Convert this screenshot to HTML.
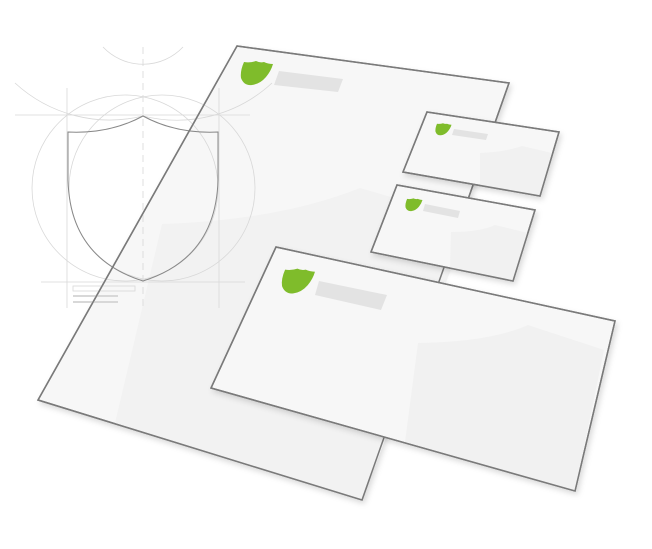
<!DOCTYPE html><html><head><style>html,body{margin:0;background:#fff;width:652px;height:549px;overflow:hidden}</style></head><body>
<svg width="652" height="549" viewBox="0 0 652 549" xmlns="http://www.w3.org/2000/svg">
<defs>
<filter id="sh" x="-10%" y="-10%" width="130%" height="130%"><feDropShadow dx="2" dy="3" stdDeviation="3" flood-color="#000" flood-opacity="0.15"/></filter>
<symbol id="lg" viewBox="0 0 34 25"><path d="M4 1 Q10 2 16 0 Q20 2 24 1 Q28 3 33 3 Q31 10 26 16 Q20 23 12 24 Q4 25 1 17 Q0 10 4 1Z" fill="#7fbc2b"/></symbol>
</defs>
<g stroke="#7a7a7a" stroke-width="1.5" filter="url(#sh)">
<path d="M237 46 L509 83 L362 500 L38 400 Z" fill="#f7f7f7"/>
</g>
<path d="M162 224 Q280 220 360 188 L470 220 L362 500 L115 423 Z" fill="#f2f2f2"/>
<g fill="none" stroke="#d8d8d8" stroke-width="0.8">
<circle cx="125" cy="188" r="93"/><circle cx="162" cy="188" r="93"/>
<path d="M15 83 A140 140 0 0 0 143 116 A140 140 0 0 0 272 83"/>
<path d="M103 47 A55 55 0 0 0 183 47"/>
<line x1="15" y1="115" x2="250" y2="115"/><line x1="41" y1="282" x2="245" y2="282"/>
<line x1="67" y1="88" x2="67" y2="308"/><line x1="219" y1="88" x2="219" y2="308"/>
<line x1="143" y1="47" x2="143" y2="310" stroke-dasharray="7 5"/>
<rect x="73" y="286" width="62" height="5"/><line x1="73" y1="296" x2="118" y2="296" stroke-width="2"/><line x1="73" y1="302" x2="118" y2="302" stroke-width="2"/>
</g>
<path d="M68 132 Q110 134 143 116 Q176 134 218 132 L218 180 Q216 258 143 281 Q70 258 68 180 Z" fill="none" stroke="#888" stroke-width="1"/>
<path d="M237 46 L509 83 L362 500 L38 400 Z" fill="none" stroke="#7a7a7a" stroke-width="1.5"/>
<use href="#lg" x="240" y="61" width="34" height="25"/>
<path d="M279 71 L343 79 L338 92 L274 85Z" fill="#e3e3e3"/>
<g stroke="#7a7a7a" stroke-width="1.5" filter="url(#sh)">
<path d="M427 112 L559 132 L540 196 L403 172 Z" fill="#f7f7f7"/>
<path d="M397 185 L535 210 L513 281 L371 252 Z" fill="#f7f7f7"/>
<path d="M276 247 L615 321 L575 491 L211 388 Z" fill="#f7f7f7"/>
</g>
<path d="M480 153 Q505 152 522 146 L552 153 L540 196 L480 186Z" fill="#f1f1f1"/>
<path d="M451 232 Q480 232 495 225 L528 233 L513 281 L450 268Z" fill="#f1f1f1"/>
<path d="M418 343 Q490 342 528 325 L604 350 L575 491 L405 442Z" fill="#f1f1f1"/>
<g fill="none" stroke="#7a7a7a" stroke-width="1.5">
<path d="M427 112 L559 132 L540 196 L403 172 Z"/><path d="M397 185 L535 210 L513 281 L371 252 Z"/><path d="M276 247 L615 321 L575 491 L211 388 Z"/>
</g>
<use href="#lg" x="435" y="123" width="17" height="13"/>
<path d="M454 129 L488 134 L486 140 L452 135Z" fill="#e3e3e3"/>
<use href="#lg" x="405" y="198" width="18" height="14"/>
<path d="M425 204 L460 211 L458 218 L423 211Z" fill="#e3e3e3"/>
<use href="#lg" x="281" y="266" width="35" height="31"/>
<path d="M319 281 L387 295 L381 310 L315 295Z" fill="#e3e3e3"/>
</svg>
</body></html>
